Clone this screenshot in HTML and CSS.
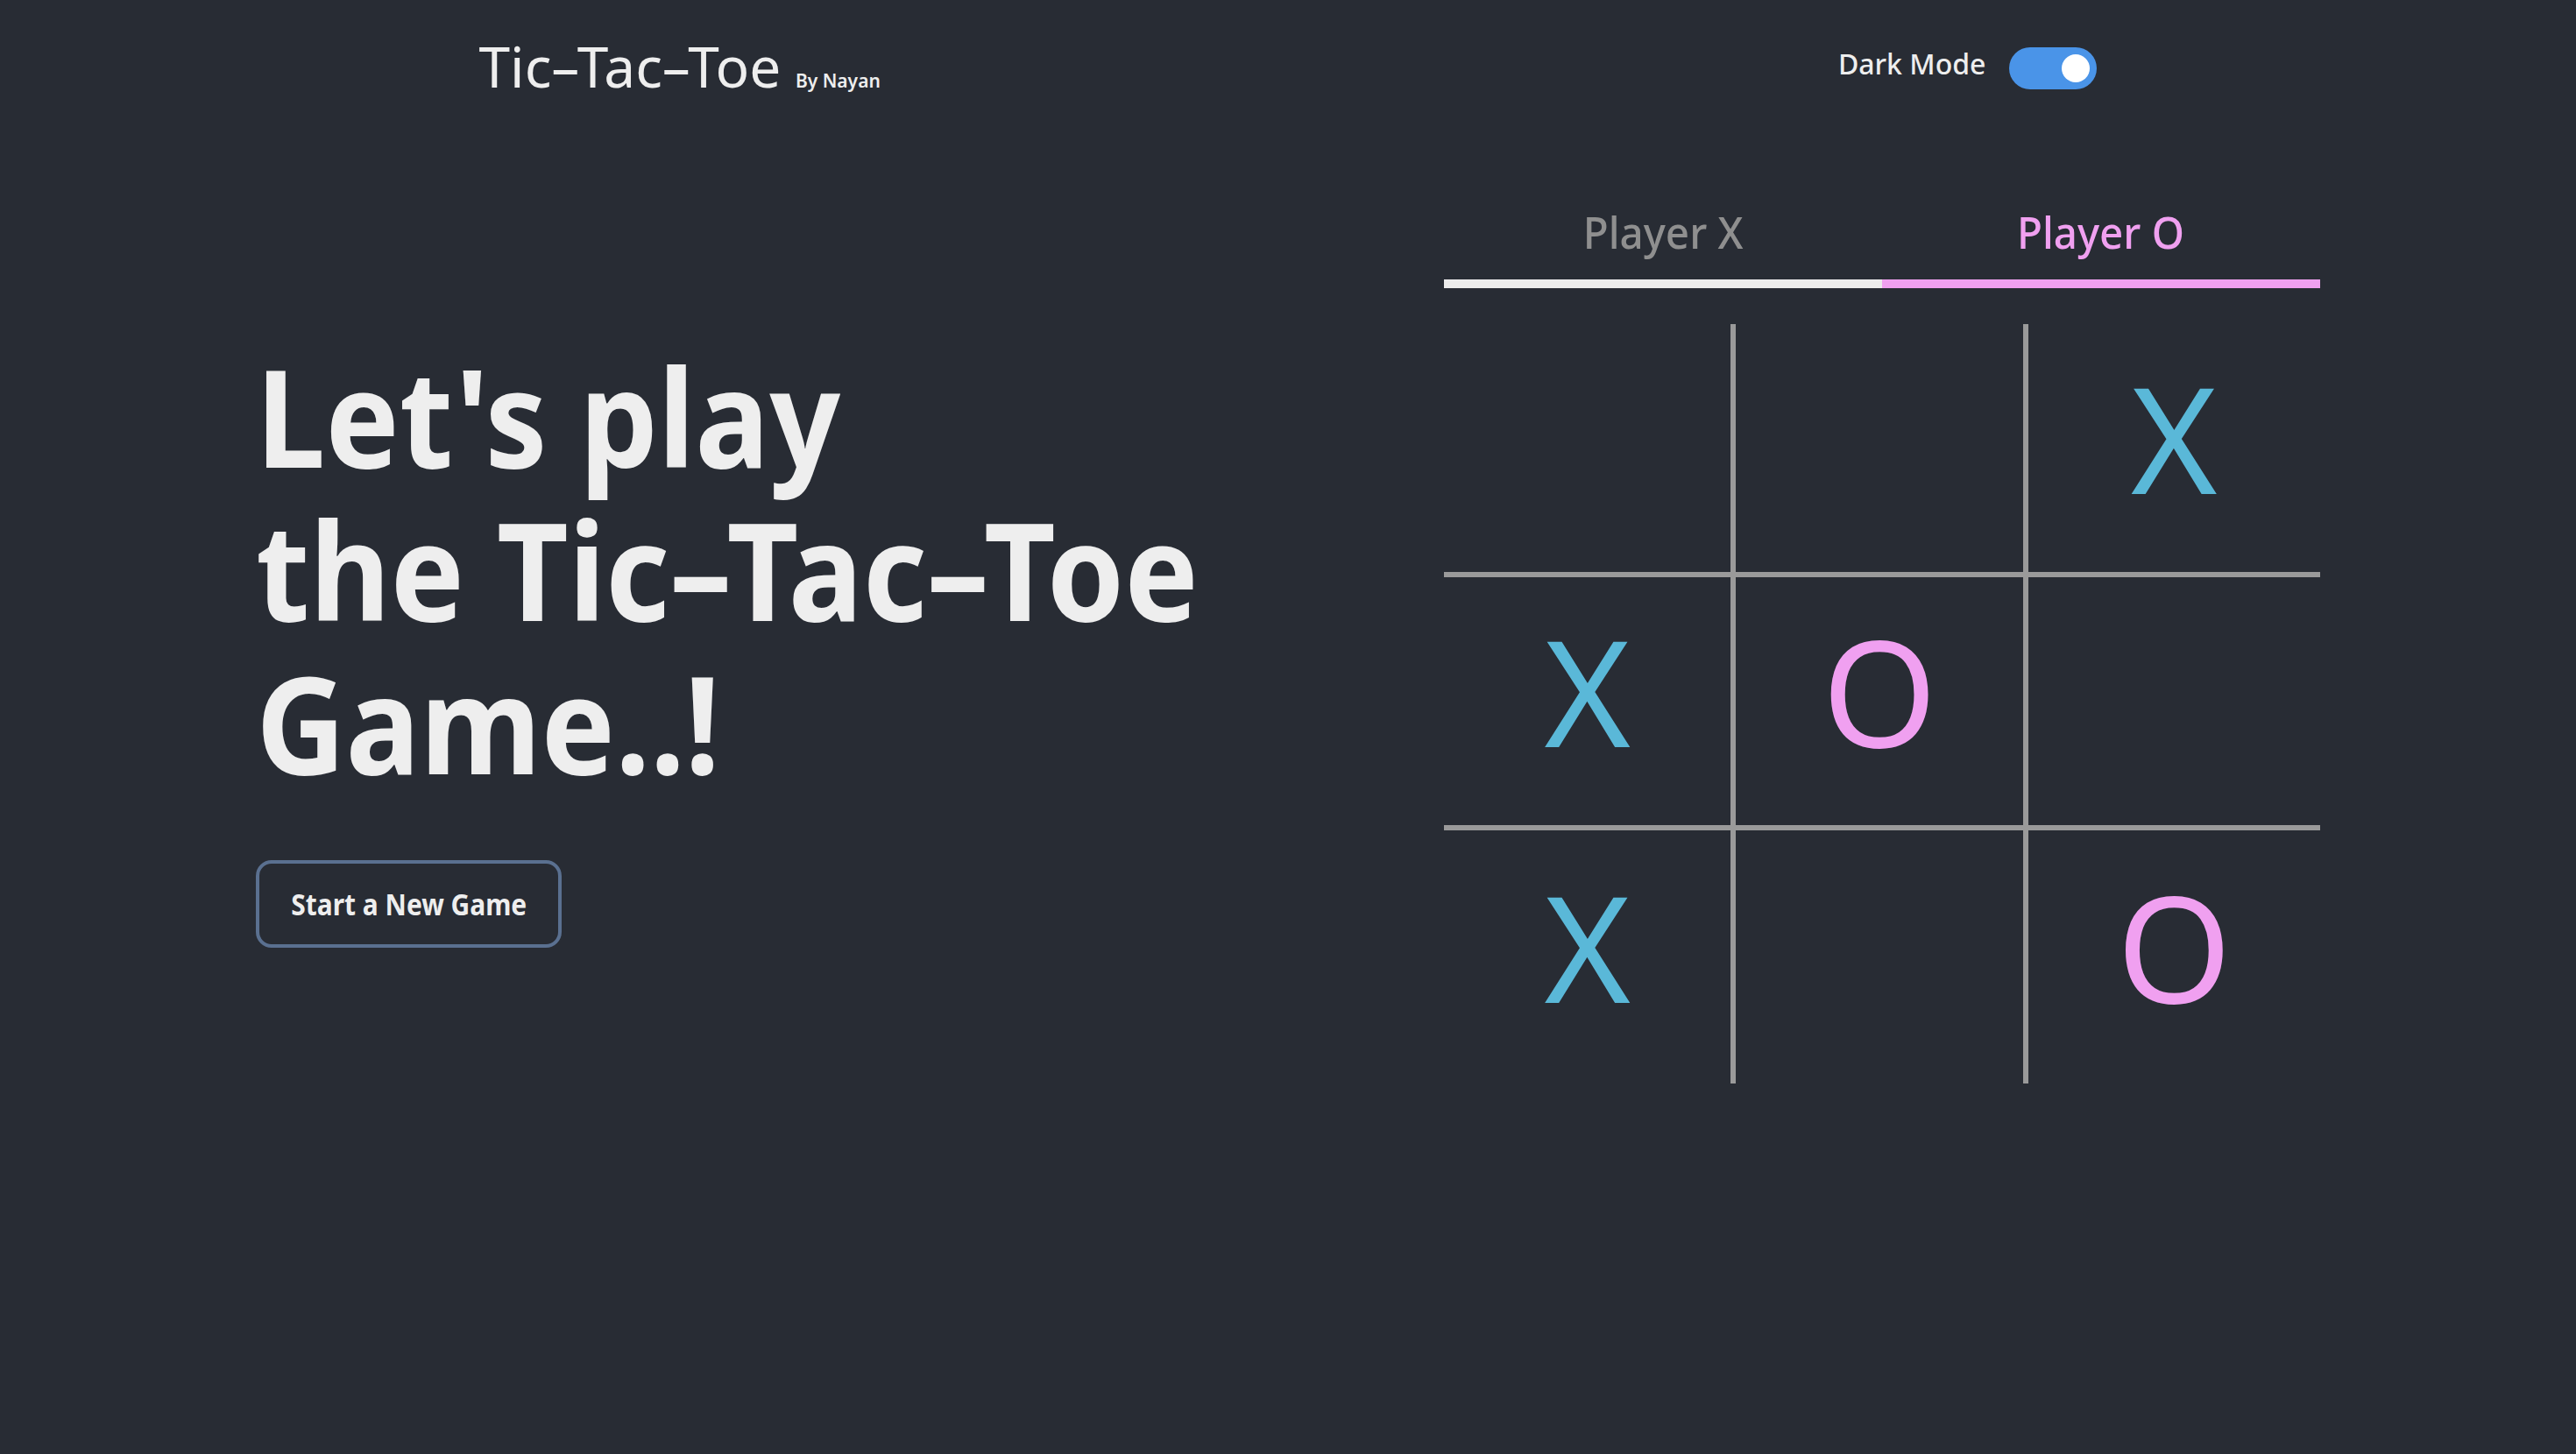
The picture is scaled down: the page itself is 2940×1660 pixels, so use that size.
FILE: index.html
```html
<!DOCTYPE html>
<html lang="en">
<head>
<meta charset="utf-8">
<title>Tic-Tac-Toe</title>
<link rel="stylesheet" href="styles.css">
</head>
<body>
<header class="header">
  <h1 class="brand">Tic–Tac–Toe <span class="brand-by">By Nayan</span></h1>
  <div class="mode">
    <span class="mode-label">Dark Mode</span>
    <span class="switch"><span class="switch-knob"></span></span>
  </div>
</header>
<main class="main">
  <section class="intro">
    <h2 class="headline">Let's play<br>the Tic–Tac–Toe<br>Game..!</h2>
    <button class="start-btn"><span class="start-text">Start a New Game</span></button>
  </section>
  <section class="game">
    <div class="tabs">
      <div class="tab tab-x"><span class="tab-text">Player X</span></div>
      <div class="tab tab-o"><span class="tab-text">Player O</span></div>
    </div>
    <div class="board">
      <div class="cell"></div>
      <div class="cell"></div>
      <div class="cell mark-x">X</div>
      <div class="cell mark-x">X</div>
      <div class="cell mark-o">O</div>
      <div class="cell"></div>
      <div class="cell mark-x">X</div>
      <div class="cell"></div>
      <div class="cell mark-o">O</div>
    </div>
  </section>
</main>
</body>
</html>
```
FILE: styles.css
```css
html, body {
  margin: 0;
  padding: 0;
}
body {
  background: #282c34;
  color: #eeeeee;
  font-family: "Noto Sans", "Open Sans", sans-serif;
  width: 2940px;
  height: 1660px;
  overflow: hidden;
}
.header {
  display: flex;
  justify-content: space-around;
  align-items: flex-start;
  padding-top: 32px;
}
.brand {
  margin: 0;
  font-size: 64px;
  font-weight: 400;
  line-height: 87px;
  color: #eeeeee;
}
.brand-by {
  font-size: 21px;
  font-weight: 600;
}
.mode {
  display: flex;
  align-items: flex-start;
  gap: 27px;
}
.mode-label {
  margin-top: 19px;
  font-size: 32px;
  font-weight: 500;
  color: #eeeeee;
}
.switch {
  margin-top: 22px;
  width: 100px;
  height: 48px;
  border-radius: 24px;
  background: #4a94e8;
  display: flex;
  align-items: center;
  justify-content: flex-end;
  padding: 0 8px;
  box-sizing: border-box;
}
.switch-knob {
  width: 32px;
  height: 32px;
  border-radius: 50%;
  background: #ffffff;
}
.main {
  display: flex;
  align-items: center;
  padding-top: 95px;
}
.intro {
  flex: 1;
  padding-left: 292px;
}
.headline {
  margin: 0;
  font-size: 154px;
  font-weight: 700;
  line-height: 175px;
  color: #eeeeee;
  transform: scaleX(0.92);
  transform-origin: left top;
  white-space: nowrap;
}
.start-btn {
  margin-top: 70px;
  width: 349px;
  height: 100px;
  border: 4px solid #5a7090;
  border-radius: 18px;
  background: transparent;
  color: #eeeeee;
  font-family: "Noto Sans", "Open Sans", sans-serif;
  font-size: 34px;
  font-weight: 700;
  padding: 0;
  white-space: nowrap;
  display: flex;
  align-items: center;
  justify-content: center;
}
.start-text {
  display: inline-block;
  transform: scaleX(0.88);
}
.game {
  width: 1000px;
  margin-right: 292px;
}
.tabs {
  display: flex;
}
.tab {
  flex: 1;
  text-align: center;
  font-size: 50px;
  font-weight: 500;
  padding-bottom: 20px;
  border-bottom: 10px solid #ececec;
}
.tab-text {
  display: inline-block;
  transform: scaleX(0.95);
}
.tab-x {
  color: #8f8f8f;
}
.tab-o {
  color: #f0a0f0;
  border-bottom-color: #f0a0f0;
}
.board {
  margin-top: 41px;
  display: grid;
  grid-template-columns: repeat(3, 1fr);
  grid-template-rows: repeat(3, 289px);
}
.cell {
  display: flex;
  align-items: center;
  justify-content: center;
  font-size: 168px;
  font-weight: 400;
  line-height: 1;
  padding-bottom: 25px;
  box-sizing: border-box;
}
.cell:nth-child(3n+1),
.cell:nth-child(3n+2) {
  border-right: 6px solid #9a9a9a;
}
.cell:nth-child(-n+6) {
  border-bottom: 6px solid #9a9a9a;
}
.mark-x {
  color: #5ab8d8;
}
.mark-o {
  color: #f0a0f0;
}
```
